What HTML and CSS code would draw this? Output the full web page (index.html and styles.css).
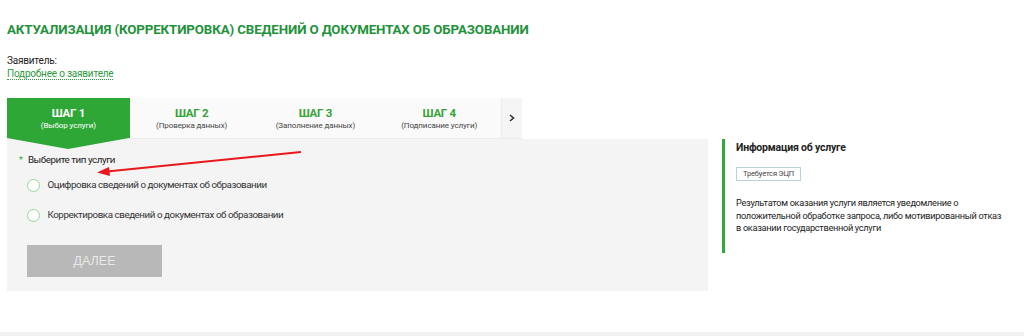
FILE: index.html
```html
<!DOCTYPE html>
<html lang="ru">
<head>
<meta charset="utf-8">
<title>Актуализация</title>
<link rel="stylesheet" href="styles.css">
</head>
<body>
<div class="page">
  <h1 class="title">АКТУАЛИЗАЦИЯ (КОРРЕКТИРОВКА) СВЕДЕНИЙ О ДОКУМЕНТАХ ОБ ОБРАЗОВАНИИ</h1>
  <div class="applicant">
    <div class="applicant-label">Заявитель:</div>
    <a class="applicant-link" href="#">Подробнее о заявителе</a>
  </div>
  <div class="layout">
    <div class="main">
      <div class="tabs">
        <div class="tab active"><span class="tab-step">ШАГ 1</span><span class="tab-sub">(Выбор услуги)</span></div>
        <div class="tab"><span class="tab-step">ШАГ 2</span><span class="tab-sub">(Проверка данных)</span></div>
        <div class="tab"><span class="tab-step">ШАГ 3</span><span class="tab-sub">(Заполнение данных)</span></div>
        <div class="tab"><span class="tab-step">ШАГ 4</span><span class="tab-sub">(Подписание услуги)</span></div>
        <div class="tab-next">
          <svg width="6" height="8" viewBox="0 0 6 8"><path d="M1 1 L4.5 4 L1 7" fill="none" stroke="#333" stroke-width="1.6"/></svg>
        </div>
      </div>
      <div class="panel">
        <div class="question"><span class="req">*</span>Выберите тип услуги</div>
        <label class="option"><span class="radio"></span>Оцифровка сведений о документах об образовании</label>
        <label class="option"><span class="radio"></span>Корректировка сведений о документах об образовании</label>
        <button class="btn-next" type="button">ДАЛЕЕ</button>
      </div>
      <svg class="annotation" width="210" height="30" viewBox="0 0 210 30">
        <line x1="206" y1="2" x2="12" y2="21.5" stroke="#e8181c" stroke-width="2"/>
        <path d="M2 22.5 L14 17 L15 26 Z" fill="#e8181c"/>
      </svg>
    </div>
    <aside class="info">
      <div class="info-title">Информация об услуге</div>
      <span class="badge">Требуется ЭЦП</span>
      <p class="info-text">Результатом оказания услуги является уведомление о положительной обработке запроса, либо мотивированный отказ в оказании государственной услуги</p>
    </aside>
  </div>
</div>
<div class="footer"></div>
</body>
</html>
```
FILE: styles.css
```css
html, body {
  margin: 0;
  padding: 0;
  background: #fff;
}
body {
  font-family: Roboto, "Open Sans", "DejaVu Sans", sans-serif;
  color: #222;
  height: 336px;
  position: relative;
  overflow: hidden;
}
.page {
  padding: 0 7px;
}
.title {
  margin: 0;
  padding-top: 21px;
  font-size: 13.3px;
  line-height: 18px;
  font-weight: 700;
  color: #23923b;
  letter-spacing: -0.12px;
}
.applicant {
  margin-top: 15px;
  font-size: 10px;
  line-height: 13px;
  letter-spacing: -0.2px;
}
.applicant-label {
  color: #222;
}
.applicant-link {
  color: #2d9a3e;
  text-decoration: none;
  border-bottom: 1px dotted #2d9a3e;
}
.layout {
  display: flex;
  margin-top: 18px;
  align-items: flex-start;
}
.main {
  width: 701px;
  flex-shrink: 0;
  position: relative;
}
.tabs {
  display: flex;
  width: 515px;
  height: 41px;
  background: #fafafa;
  border-bottom: 1px solid #ececec;
  box-sizing: border-box;
}
.tab {
  width: 124px;
  display: flex;
  flex-direction: column;
  align-items: center;
  justify-content: center;
  color: #35a335;
  position: relative;
}
.tab.active {
  width: 123px;
  background: #2ea737;
  color: #fff;
}
.tab.active::after {
  content: "";
  position: absolute;
  left: 0;
  top: 100%;
  border-left: 61.5px solid transparent;
  border-right: 61.5px solid transparent;
  border-top: 11px solid #2ea737;
  z-index: 2;
}
.tab-step {
  font-size: 11.5px;
  font-weight: 700;
  line-height: 14px;
  letter-spacing: -0.3px;
}
.tab-sub {
  font-size: 8px;
  line-height: 11px;
  color: #444;
  letter-spacing: -0.1px;
}
.tab.active .tab-sub {
  color: #fff;
}
.tab-next {
  width: 20px;
  display: flex;
  align-items: center;
  justify-content: center;
  background: #f5f5f5;
  border-left: 1px solid #ececec;
}
.panel {
  background: #f4f4f4;
  height: 152px;
  box-sizing: border-box;
  padding: 14px 20px 0 20px;
}
.question {
  font-size: 9.8px;
  line-height: 14px;
  color: #222;
  margin-left: -8px;
  letter-spacing: -0.45px;
}
.req {
  color: #2ea737;
  font-size: 9px;
  margin-right: 5px;
  vertical-align: top;
  letter-spacing: 0;
}
.option {
  display: flex;
  align-items: center;
  font-size: 9.8px;
  line-height: 14px;
  color: #333;
  height: 30px;
  letter-spacing: -0.45px;
}
.option:first-of-type {
  margin-top: 3px;
}
.radio {
  width: 11px;
  height: 11px;
  border: 1.5px solid #93d793;
  border-radius: 50%;
  background: #fff;
  margin: 0 8px 0 -0.5px;
}
.btn-next {
  display: block;
  margin-top: 15px;
  width: 135px;
  height: 32px;
  border: 0;
  background: #b8b8b8;
  color: #e9e9e9;
  font-family: "Liberation Sans", Arial, sans-serif;
  font-size: 12.5px;
  padding: 0;
}
.annotation {
  position: absolute;
  left: 88px;
  top: 52px;
}
.info {
  margin-left: 14px;
  margin-top: 41px;
  border-left: 3px solid #36a83a;
  padding: 2px 0 18px 11px;
  width: 268px;
}
.info-title {
  font-size: 10.5px;
  font-weight: 700;
  line-height: 14px;
  color: #222;
  letter-spacing: -0.2px;
}
.badge {
  display: inline-block;
  margin-top: 12px;
  font-size: 7.5px;
  line-height: 12px;
  padding: 0 6px;
  color: #444;
  border: 1px solid #b9d3dc;
  background: #fff;
  letter-spacing: -0.15px;
}
.info-text {
  margin: 16px 0 0 0;
  font-size: 9.2px;
  line-height: 12.7px;
  color: #222;
  letter-spacing: -0.3px;
}
.footer {
  position: absolute;
  left: 0;
  right: 0;
  top: 332px;
  height: 4px;
  background: #f2f2f2;
}
```
